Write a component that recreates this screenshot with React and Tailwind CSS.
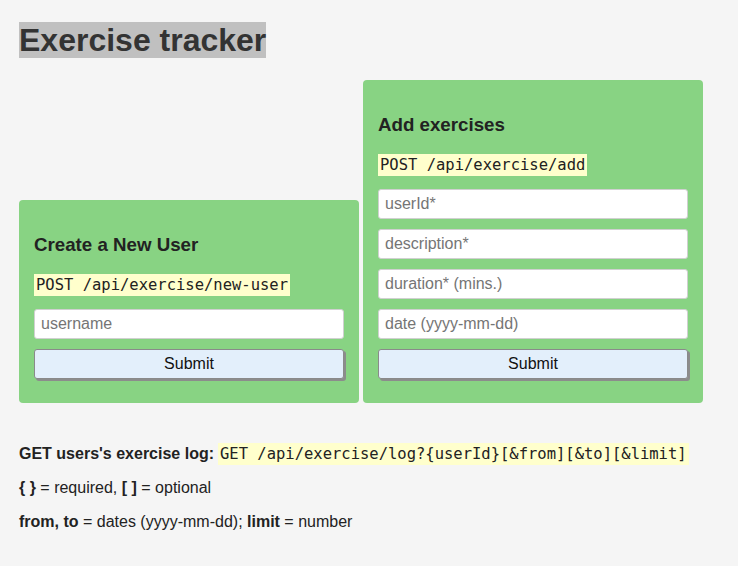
import React from "react";

const code = "bg-[#ffffcc] px-[2px] text-[15.5px] leading-[22px] text-[#222] font-['DejaVu_Sans_Mono',monospace] inline-block";

function Field({ placeholder }) {
  return (
    <input
      type="text"
      placeholder={placeholder}
      className="block w-full h-[30px] rounded-[3px] border border-[#d0d0d0] bg-white px-[6px] text-[16px] text-[#222] placeholder:text-[#757575] outline-none font-['Liberation_Sans',Arial,sans-serif]"
    />
  );
}

function Card({ title, endpoint, fields }) {
  return (
    <div className="w-[340px] rounded-[4px] bg-[#88d383] px-[15px] pt-[34px] pb-[24px]">
      <h3 className="text-[18.72px] font-bold leading-[21px] text-[#222]">{title}</h3>
      <div className="mt-[18px] h-[22px]">
        <code className={code}>{endpoint}</code>
      </div>
      <form className="mt-[14px] flex flex-col gap-[10px]" onSubmit={(e) => e.preventDefault()}>
        {fields.map((f) => (
          <Field key={f} placeholder={f} />
        ))}
        <button
          type="submit"
          className="block w-full h-[30px] rounded-[3px] border border-[#8a8a8a] bg-[#e3effb] text-[16px] text-[#111] shadow-[2px_2px_0_#8c8c8c] font-['Liberation_Sans',Arial,sans-serif]"
        >
          Submit
        </button>
      </form>
    </div>
  );
}

export default function App() {
  return (
    <div className="min-h-screen bg-[#f5f5f5] px-[19px] pt-[22px] pb-[20px] font-['Liberation_Sans',Arial,sans-serif] text-[16px] text-[#222]">
      <h1 className="h-[36px]">
        <span className="inline-block bg-[#c0c0c0] text-[32px] font-bold leading-[36px] text-[#333]">
          Exercise tracker
        </span>
      </h1>
      <div className="mt-[22px] flex items-end gap-[4px]">
        <Card title="Create a New User" endpoint="POST /api/exercise/new-user" fields={["username"]} />
        <Card
          title="Add exercises"
          endpoint="POST /api/exercise/add"
          fields={["userId*", "description*", "duration* (mins.)", "date (yyyy-mm-dd)"]}
        />
      </div>
      <p className="mt-[40px] flex h-[22px] items-center leading-[22px]">
        <b className="mr-[4px]">GET users's exercise log:</b>
        <code className={code}>GET /api/exercise/log?{"{userId}"}[&amp;from][&amp;to][&amp;limit]</code>
      </p>
      <p className="mt-[12px] leading-[22px]">
        <b>{"{ }"}</b> = required, <b>[ ]</b> = optional
      </p>
      <p className="mt-[12px] leading-[22px]">
        <b>from, to</b> = dates (yyyy-mm-dd); <b>limit</b> = number
      </p>
    </div>
  );
}
